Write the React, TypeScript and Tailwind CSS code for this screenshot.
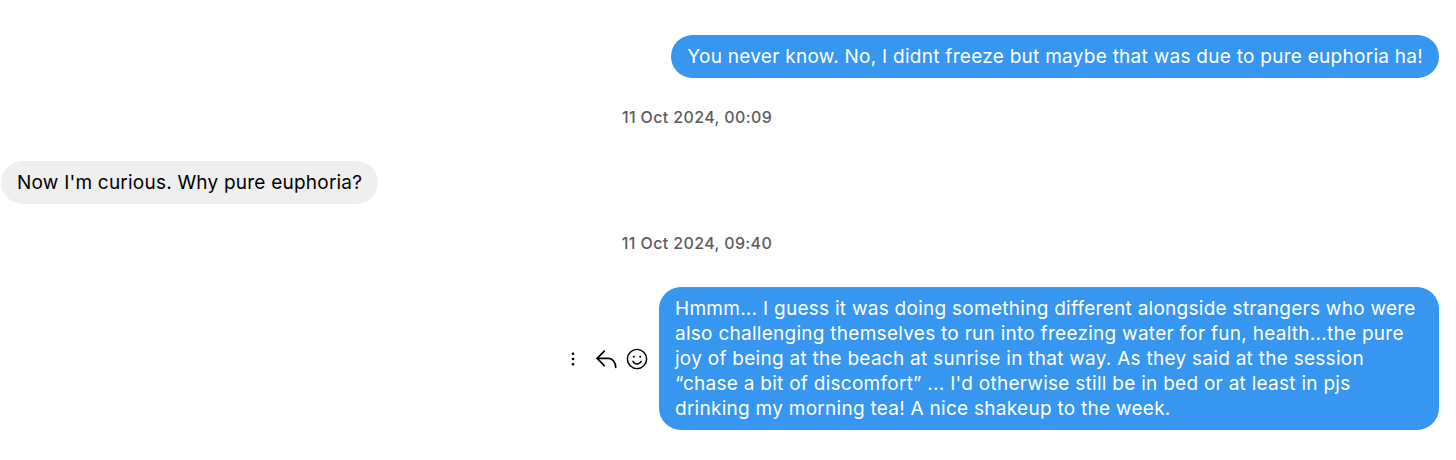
function Stamp({ text }: { text: string }) {
  return <p className="pr-[46px] text-center text-[16px] leading-[20px] font-medium tracking-[0.38px] text-[#5c5d60]">{text}</p>;
}

export default function App() {
  return (
    <div className="h-[460px] w-[1456px] overflow-hidden bg-white pl-px pr-[17px] pt-[35px] text-[19px] leading-[25px] tracking-[0.27px] [font-family:Inter,sans-serif]">
      <div className="flex justify-end">
        <div className="rounded-[22px] bg-[#3797f0] px-4 py-[9px] text-white">
          You never know. No, I didnt freeze but maybe that was due to pure euphoria ha!
        </div>
      </div>
      <div className="mt-[29px]"><Stamp text="11 Oct 2024, 00:09" /></div>
      <div className="mt-[34px] flex justify-start">
        <div className="rounded-[22px] bg-[#efefef] px-4 py-[9px] tracking-[0.22px] text-black">Now I'm curious. Why pure euphoria?</div>
      </div>
      <div className="mt-[29px]"><Stamp text="11 Oct 2024, 09:40" /></div>
      <div className="mt-[34px] flex items-center justify-end">
        <div className="mr-[11px] flex items-center text-black">
          <svg width="6" height="16" viewBox="0 0 6 16" fill="currentColor">
            <circle cx="3" cy="2.700" r="1.300" />
            <circle cx="3" cy="8" r="1.300" />
            <circle cx="3" cy="13.300" r="1.300" />
          </svg>
          <svg className="ml-[20px]" width="21" height="22" viewBox="0 0 21 22" fill="none" stroke="currentColor" strokeWidth="1.700" strokeLinecap="round" strokeLinejoin="round">
            <path d="M8.300 3.200 1.200 10.300l7.100 7.300" />
            <path d="M1.200 10.300H12.500a7.200 9 0 0 1 7.200 9" />
          </svg>
          <svg className="ml-[9px]" width="22" height="22" viewBox="0 0 24 24" fill="none" stroke="currentColor" strokeWidth="1.600" strokeLinecap="round">
            <circle cx="12" cy="12" r="10.500" />
            <path d="M7.500 14.500c1 2 2.600 3 4.500 3s3.500-1 4.500-3" />
            <circle cx="8.500" cy="9.500" r="1.100" fill="currentColor" stroke="none" />
            <circle cx="15.500" cy="9.500" r="1.100" fill="currentColor" stroke="none" />
          </svg>
        </div>
        <div className="w-[780px] rounded-[22px] bg-[#3797f0] px-4 py-[9px] text-white">
          Hmmm... I guess it was doing something different alongside strangers who were also challenging themselves to run into freezing water for fun, health...the pure joy of being at the beach at sunrise in that way. As they said at the session “chase a bit of discomfort” ... I'd otherwise still be in bed or at least in pjs drinking my morning tea! A nice shakeup to the week.
        </div>
      </div>
    </div>
  );
}
